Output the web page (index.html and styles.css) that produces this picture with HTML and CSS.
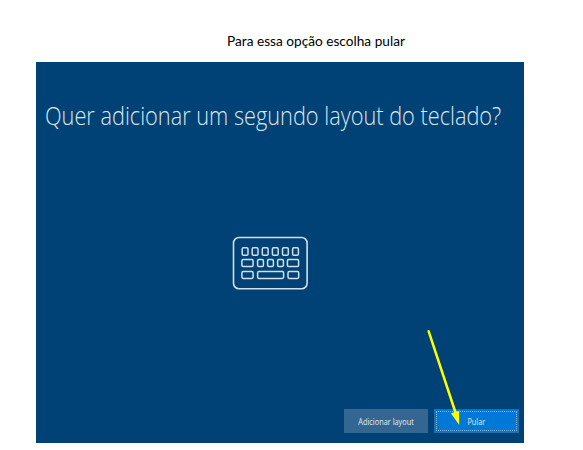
FILE: index.html
```html
<!DOCTYPE html>
<html lang="pt-BR">
<head>
<meta charset="utf-8">
<title>Layout do teclado</title>
<link rel="stylesheet" href="styles.css">
</head>
<body>
<p class="caption"><span>Para essa opção escolha pular</span></p>
<main class="setup">
  <h1 class="title"><span>Quer adicionar um segundo layout do teclado?</span></h1>
  <svg class="keyboard" width="76" height="54" viewBox="0 0 76 54" fill="none" stroke="#d3e0e9">
    <rect x="1.5" y="1.5" width="73.6" height="51.2" rx="5.5" stroke-width="1.6"/>
    <g stroke-width="1.5">
      <rect x="10.2" y="11.8" width="5.8" height="7.4" rx="1.3"/>
      <rect x="20.2" y="11.8" width="5.8" height="7.4" rx="1.3"/>
      <rect x="30.3" y="11.8" width="5.8" height="7.4" rx="1.3"/>
      <rect x="40.4" y="11.8" width="5.8" height="7.4" rx="1.3"/>
      <rect x="50.5" y="11.8" width="5.8" height="7.4" rx="1.3"/>
      <rect x="60.6" y="11.8" width="5.8" height="7.4" rx="1.3"/>
      <rect x="9.9" y="23.6" width="11.2" height="7" rx="1.3"/>
      <rect x="25.6" y="23.6" width="5.8" height="7" rx="1.3"/>
      <rect x="35.6" y="23.6" width="5.8" height="7" rx="1.3"/>
      <rect x="45.6" y="23.6" width="5.8" height="7" rx="1.3"/>
      <rect x="55.4" y="23.6" width="11.2" height="7" rx="1.3"/>
      <rect x="9.9" y="35.6" width="11.2" height="6.8" rx="1.3"/>
      <rect x="25.6" y="35.6" width="26" height="6.8" rx="1.3"/>
      <rect x="56" y="35.6" width="10.7" height="6.8" rx="1.3"/>
    </g>
  </svg>
  <div class="actions">
    <button class="btn" type="button"><span>Adicionar layout</span></button>
    <button class="btn primary" type="button"><span>Pular</span></button>
  </div>
  <svg class="arrow" width="40" height="100" viewBox="0 0 40 100">
    <path d="M5.6 10.2 33 93" stroke="#ff0" stroke-width="2.5" stroke-linecap="round"/>
    <path d="M36.2 104 27.9 92.3 36.2 89.8Z" fill="#ff0"/>
  </svg>
</main>
</body>
</html>
```
FILE: styles.css
```css
* { box-sizing: border-box; }
body {
  margin: 0;
  width: 583px;
  height: 450px;
  overflow: hidden;
  background: #fff;
}
.caption {
  margin: 0;
  height: 62px;
  padding: 32px 0 0 227px;
  font: 13.5px/19px Lato, "Liberation Sans", sans-serif;
  color: #000;
  white-space: nowrap;
}
.caption span,
.title span {
  display: inline-block;
  transform-origin: 0 50%;
}
.caption span { transform: scaleX(1.012); }
.setup {
  position: relative;
  display: flex;
  flex-direction: column;
  width: 488px;
  height: 381px;
  margin-left: 36px;
  background: #004275;
}
.title {
  margin: 0;
  padding: 35px 0 0 9px;
  font: 300 26.5px/36px "Open Sans", "Liberation Sans", sans-serif;
  color: #dde7ee;
  white-space: nowrap;
}
.title span { transform: scaleX(.82); }
.keyboard {
  margin: 103px 0 0 196px;
}
.actions {
  display: flex;
  gap: 6px;
  justify-content: flex-end;
  margin-top: auto;
  padding: 0 5.5px 10px 0;
}
.btn {
  width: 84.5px;
  height: 24px;
  padding: 0;
  border: 0;
  background: #336791;
  color: #e3ebf1;
  font: 8.5px/24px "Open Sans", "Liberation Sans", sans-serif;
  white-space: nowrap;
}
.btn span {
  display: inline-block;
  transform: translateY(.5px) scaleX(.865);
}
.primary {
  background: #0078d7;
  border: 1px solid #1a70b5;
  outline: 1px dotted #83b9e6;
  outline-offset: -3px;
  line-height: 22px;
}
.arrow {
  position: absolute;
  left: 387px;
  top: 259px;
  overflow: visible;
}
```
